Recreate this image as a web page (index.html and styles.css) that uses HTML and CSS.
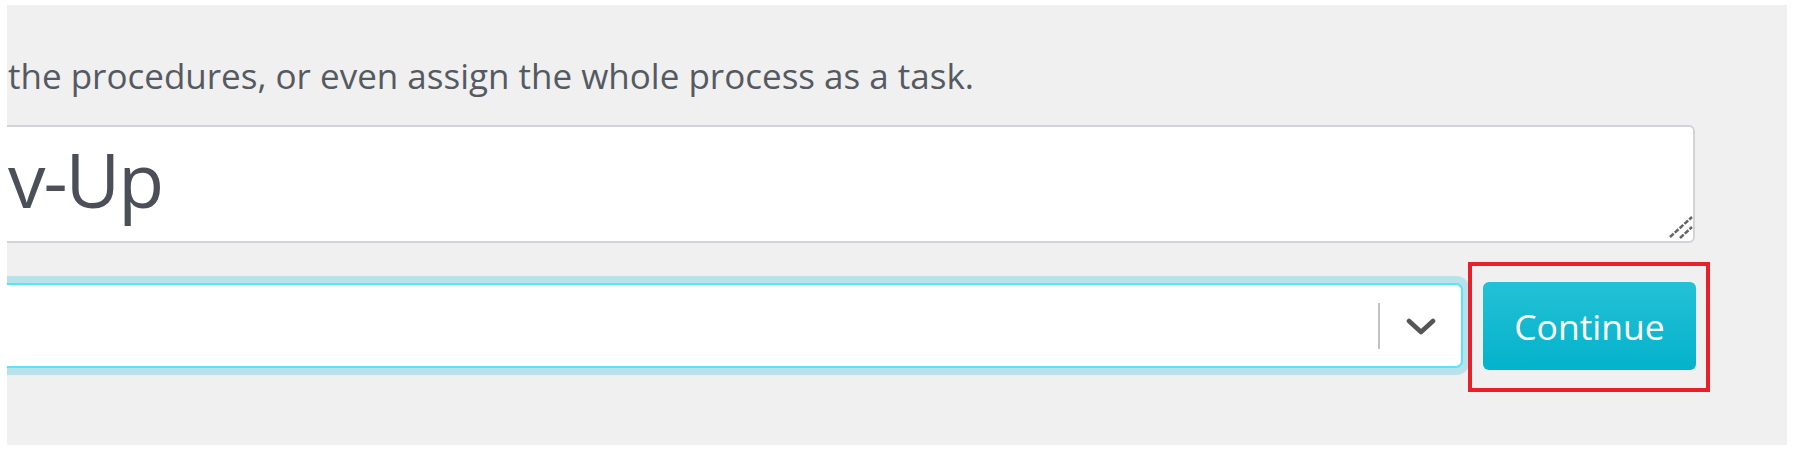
FILE: index.html
```html
<!DOCTYPE html>
<html lang="en">
<head>
<meta charset="utf-8">
<title>Follow-Up</title>
<link rel="stylesheet" href="styles.css">
</head>
<body>
<div class="panel">
  <p class="intro">the procedures, or even assign the whole process as a task.</p>
  <div class="textarea">
    <span class="title">v-Up</span>
    <svg class="grip" width="24" height="24" viewBox="0 0 24 24" aria-hidden="true">
      <line x1="1" y1="22" x2="23" y2="2" />
      <line x1="11" y1="23" x2="23" y2="12" />
    </svg>
  </div>
  <div class="row">
    <div class="select">
      <span class="sep"></span>
      <svg class="caret" width="30" height="20" viewBox="0 0 30 20" aria-hidden="true">
        <polyline points="3,4 15,15 27,4" />
      </svg>
    </div>
    <div class="highlight">
      <button class="btn">Continue</button>
    </div>
  </div>
</div>
</body>
</html>
```

FILE: styles.css
```css
html, body {
  margin: 0;
  padding: 0;
  background: #ffffff;
}

.panel {
  margin: 5px 0 0 7px;
  width: 1780px;
  height: 440px;
  background: #f0f0f0;
  overflow: hidden;
  font-family: "Open Sans", "Noto Sans", sans-serif;
}

.intro {
  margin: 0;
  padding: 51px 0 0 1px;
  font-size: 35px;
  line-height: 40px;
  color: #555a62;
  white-space: nowrap;
}

.textarea {
  position: relative;
  box-sizing: border-box;
  margin: 29px 0 0 -10px;
  width: 1698px;
  height: 118px;
  background: #ffffff;
  border: 2px solid #d0d4da;
  border-radius: 6px;
  padding: 0 0 0 9px;
  overflow: hidden;
}

.title {
  display: block;
  font-size: 75px;
  line-height: 104px;
  color: #4b5058;
  letter-spacing: -2px;
}

.grip {
  position: absolute;
  right: 0;
  bottom: 2px;
}

.grip line {
  stroke: #666666;
  stroke-width: 2.6;
  stroke-dasharray: 5 1.5;
}

.row {
  display: flex;
  align-items: flex-start;
  margin-top: 19px;
}

.select {
  box-sizing: border-box;
  margin: 21px 0 0 -10px;
  width: 1466px;
  height: 85px;
  background: #ffffff;
  border: 2px solid #5ae2f6;
  border-radius: 7px;
  box-shadow: 0 0 1px 7px #b7e2e9;
  display: flex;
  align-items: center;
  justify-content: flex-end;
}

.sep {
  width: 2px;
  height: 46px;
  background: #c2c2c2;
}

.caret {
  margin: 2px 25px 0 26px;
}

.caret polyline {
  fill: none;
  stroke: #555555;
  stroke-width: 4.6;
  stroke-linecap: round;
  stroke-linejoin: round;
}

.highlight {
  margin-left: 5px;
  border: 4px solid #e8202a;
  padding: 16px 10px 18px 11px;
  display: flex;
}

.btn {
  width: 213px;
  height: 88px;
  border: none;
  border-radius: 6px;
  background: linear-gradient(#24c1d6, #03b2cb);
  color: #ffffff;
  font-family: "Open Sans", "Noto Sans", sans-serif;
  font-size: 35.5px;
  padding: 0;
  cursor: pointer;
}
```
